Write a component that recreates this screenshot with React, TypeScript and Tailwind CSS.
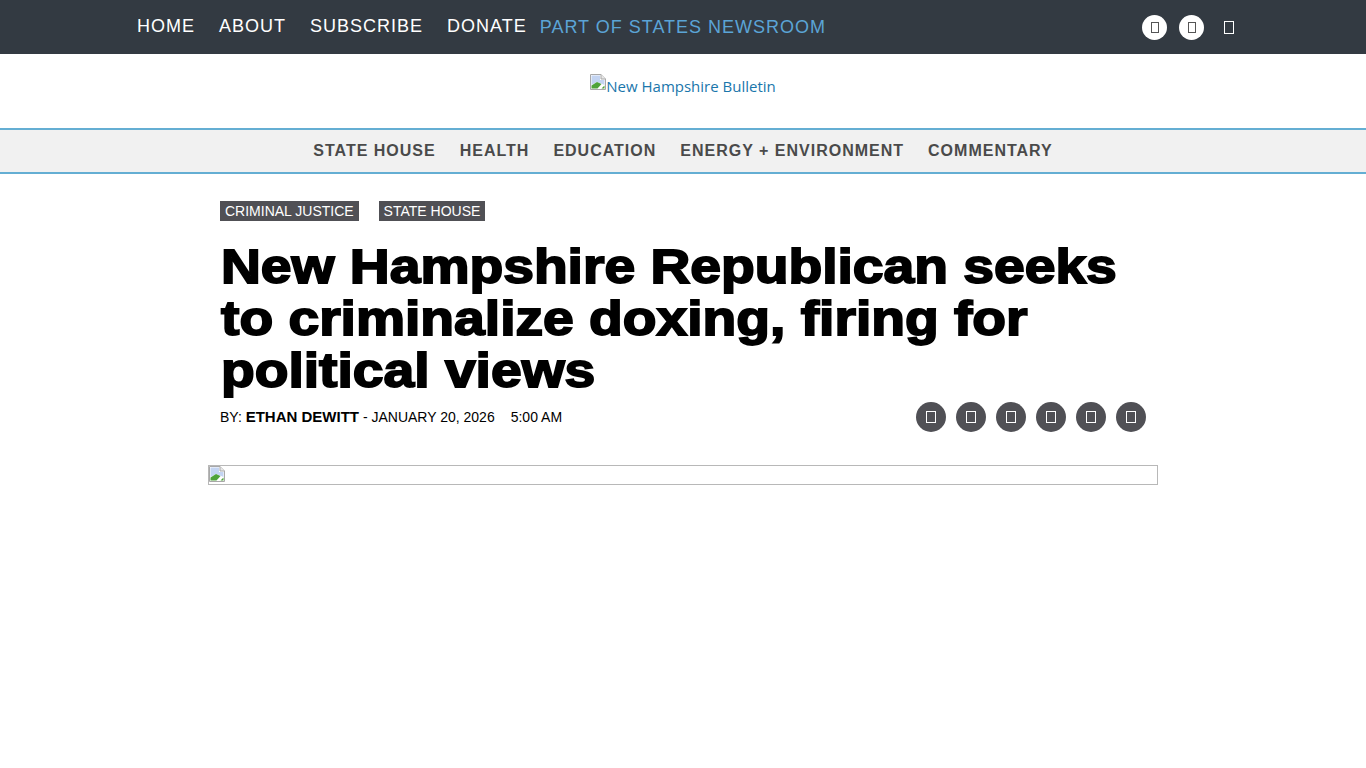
const topLinks = ["HOME", "ABOUT", "SUBSCRIBE", "DONATE"];
const sections = ["STATE HOUSE", "HEALTH", "EDUCATION", "ENERGY + ENVIRONMENT", "COMMENTARY"];

function Tofu({ className }: { className: string }) {
  return <span className={`block border ${className}`} />;
}

function BrokenImage() {
  return (
    <svg width="16" height="16" viewBox="0 0 16 16" className="shrink-0">
      <path d="M0.5 0.5H11L15.5 5V15.5H0.5Z" fill="#fff" stroke="#a8a8a8" />
      <path d="M11 0.5V5H15.5" fill="#e8e8e8" stroke="#a8a8a8" />
      <path d="M1.5 1.5H10V6H14.5V11L11 9.5L7 8L1.5 11Z" fill="#c3d4f2" />
      <path d="M1.5 14.5V11.5L7 8L11.5 10L7.5 14.5Z" fill="#4fa33a" />
      <path d="M11.5 14.5L14.5 11.5V14.5Z" fill="#4fa33a" />
    </svg>
  );
}

export default function App() {
  return (
    <div className="min-h-[768px] bg-white font-['Liberation_Sans',Arial,sans-serif]">
      <header className="flex h-[54px] items-center bg-[#333a42] pl-[137px]">
        <nav className="flex gap-[24px] text-[18px] tracking-[1px] text-white">
          {topLinks.map((link) => (
            <a key={link} className="pb-[2px]">
              {link}
            </a>
          ))}
        </nav>
        <span className="ml-[13px] text-[18px] tracking-[1px] text-[#5ba4d6]">
          PART OF STATES NEWSROOM
        </span>
        <div className="ml-[316px] flex items-center gap-[12px]">
          <span className="flex h-[25px] w-[25px] items-center justify-center rounded-full bg-white">
            <Tofu className="h-[11px] w-[8px] border-[#555]" />
          </span>
          <span className="flex h-[25px] w-[25px] items-center justify-center rounded-full bg-white">
            <Tofu className="h-[11px] w-[8px] border-[#555]" />
          </span>
          <span className="flex h-[25px] w-[25px] items-center justify-center">
            <Tofu className="h-[13px] w-[10px] border-white" />
          </span>
        </div>
      </header>

      <div className="flex h-[74px] items-start justify-center pt-[20px]">
        <a className="flex items-start font-['Open_Sans',sans-serif] text-[15px] leading-[24px] text-[#1a76ab]">
          <BrokenImage />
          New Hampshire Bulletin
        </a>
      </div>

      <nav className="flex h-[46px] items-center justify-center gap-[24px] border-y-2 border-[#64aed3] bg-[#f1f1f1] text-[16px] font-bold tracking-[1px] text-[#4a4a4a]">
        {sections.map((section) => (
          <a key={section}>{section}</a>
        ))}
      </nav>

      <main className="mx-auto w-[950px] pt-[27px]">
        <div className="flex gap-[20px] pl-[12px]">
          {["CRIMINAL JUSTICE", "STATE HOUSE"].map((tag) => (
            <span key={tag} className="flex h-[20px] items-center bg-[#505055] px-[5px] text-[14px] text-white">
              {tag}
            </span>
          ))}
        </div>

        <h1 className="ml-[13px] mt-[20px] w-[790px] origin-left scale-x-[1.15] text-[48px] font-bold leading-[52px] text-black [-webkit-text-stroke:1.8px_black]">
          New Hampshire Republican seeks to criminalize doxing, firing for political views
        </h1>

        <div className="mt-[5px] flex h-[30px] items-center pl-[12px] text-[14px] text-black">
          <span>BY:&nbsp;</span>
          <span className="text-[15px] font-bold">ETHAN DEWITT</span>
          <span>&nbsp;- JANUARY 20, 2026</span>
          <span className="ml-[16px]">5:00 AM</span>
          <div className="ml-auto mr-[12px] flex gap-[10px]">
            {[0, 1, 2, 3, 4, 5].map((i) => (
              <span key={i} className="flex h-[30px] w-[30px] items-center justify-center rounded-full bg-[#505055]">
                <Tofu className="h-[12px] w-[10px] border-white" />
              </span>
            ))}
          </div>
        </div>

        <div className="mt-[33px] h-[20px] border border-[#b8b8b8]">
          <BrokenImage />
        </div>
      </main>
    </div>
  );
}
